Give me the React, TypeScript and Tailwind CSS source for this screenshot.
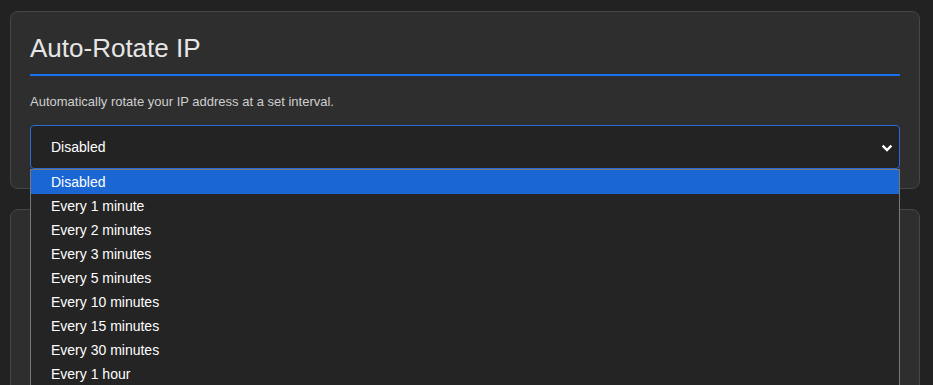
const options = [
  'Disabled',
  'Every 1 minute',
  'Every 2 minutes',
  'Every 3 minutes',
  'Every 5 minutes',
  'Every 10 minutes',
  'Every 15 minutes',
  'Every 30 minutes',
  'Every 1 hour',
  'Every 2 hours',
  'Every 6 hours',
];

export default function App() {
  const selected = 'Disabled';

  return (
    <div className="min-h-screen bg-[#222222] pt-[11px] font-['Liberation_Sans',Arial,sans-serif]">
      <div className="ml-[10px] w-[910px] flex flex-col gap-[20px]">
        <section className="rounded-lg border border-[#464646] bg-[#2e2e2e] px-[19px] pt-[21px] pb-[19px]">
          <h2 className="border-b-2 border-[#1a6ff2] pb-[10px] text-[26px] leading-[31px] font-normal text-[#e6e6e6]">
            Auto-Rotate IP
          </h2>
          <p className="mt-4 mb-[13px] text-[13px] leading-[19.5px] text-[#cfcfcf]">
            Automatically rotate your IP address at a set interval.
          </p>
          <div className="relative">
            <div className="flex h-[44px] items-center justify-between rounded-[4px] border border-[#2a6bd6] bg-[#232323] pt-[2px] pl-5 pr-[6px] text-[14px] text-white">
              <span>{selected}</span>
              <svg width="12" height="8" viewBox="0 0 12 8">
                <path d="M1.6 1.6 L6 6 L10.4 1.6" fill="none" stroke="#ffffff" strokeWidth="2.4" />
              </svg>
            </div>
            <ul className="absolute left-0 right-0 top-full z-10 border border-[#787878] bg-[#242424] text-[14px] text-white">
              {options.map((o) => (
                <li
                  key={o}
                  className={`flex h-[24px] items-center pt-[2px] pl-5 ${o === selected ? 'bg-[#1a67d4]' : ''}`}
                >
                  {o}
                </li>
              ))}
            </ul>
          </div>
        </section>
        <section className="h-[300px] rounded-lg border border-[#464646] bg-[#2e2e2e] p-5" />
      </div>
    </div>
  );
}
